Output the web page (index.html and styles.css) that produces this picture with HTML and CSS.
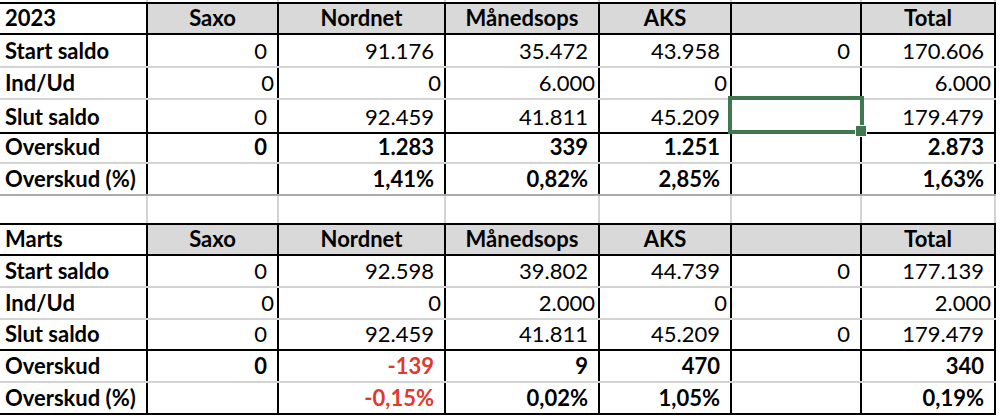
FILE: index.html
```html
<!DOCTYPE html>
<html lang="da">
<head>
<meta charset="utf-8">
<title>Overskud 2023</title>
<link rel="stylesheet" href="styles.css">
</head>
<body>
<div class="sheet">
  <div class="row edge"><div class="c"></div><div class="c"></div><div class="c"></div><div class="c"></div><div class="c"></div><div class="c"></div><div class="c"></div></div>

  <div class="row r31 line-dark head">
    <div class="c lbl">2023</div><div class="c h">Saxo</div><div class="c h">Nordnet</div><div class="c h">Månedsops</div><div class="c h">AKS</div><div class="c h"></div><div class="c h">Total</div>
  </div>
  <div class="row r33">
    <div class="c lbl">Start saldo</div><div class="c">0</div><div class="c">91.176</div><div class="c">35.472</div><div class="c">43.958</div><div class="c">0</div><div class="c">170.606</div>
  </div>
  <div class="row r32 io">
    <div class="c lbl">Ind/Ud</div><div class="c">0</div><div class="c">0</div><div class="c">6.000</div><div class="c">0</div><div class="c"></div><div class="c">6.000</div>
  </div>
  <div class="row r34 line-dark">
    <div class="c lbl">Slut saldo</div><div class="c">0</div><div class="c">92.459</div><div class="c">41.811</div><div class="c">45.209</div><div class="c"></div><div class="c">179.479</div>
  </div>
  <div class="row r30 b">
    <div class="c lbl">Overskud</div><div class="c">0</div><div class="c">1.283</div><div class="c">339</div><div class="c">1.251</div><div class="c"></div><div class="c">2.873</div>
  </div>
  <div class="row r32 b line-mid">
    <div class="c lbl">Overskud (%)</div><div class="c"></div><div class="c">1,41%</div><div class="c">0,82%</div><div class="c">2,85%</div><div class="c"></div><div class="c">1,63%</div>
  </div>

  <div class="row r29 line-dark gap"><div class="c"></div><div class="c"></div><div class="c"></div><div class="c"></div><div class="c"></div><div class="c"></div><div class="c"></div></div>

  <div class="row r31 line-dark head">
    <div class="c lbl">Marts</div><div class="c h">Saxo</div><div class="c h">Nordnet</div><div class="c h">Månedsops</div><div class="c h">AKS</div><div class="c h"></div><div class="c h">Total</div>
  </div>
  <div class="row r32">
    <div class="c lbl">Start saldo</div><div class="c">0</div><div class="c">92.598</div><div class="c">39.802</div><div class="c">44.739</div><div class="c">0</div><div class="c">177.139</div>
  </div>
  <div class="row r32 io">
    <div class="c lbl">Ind/Ud</div><div class="c">0</div><div class="c">0</div><div class="c">2.000</div><div class="c">0</div><div class="c"></div><div class="c">2.000</div>
  </div>
  <div class="row r31 line-dark">
    <div class="c lbl">Slut saldo</div><div class="c">0</div><div class="c">92.459</div><div class="c">41.811</div><div class="c">45.209</div><div class="c">0</div><div class="c">179.479</div>
  </div>
  <div class="row r32 b">
    <div class="c lbl">Overskud</div><div class="c">0</div><div class="c neg">-139</div><div class="c">9</div><div class="c">470</div><div class="c"></div><div class="c">340</div>
  </div>
  <div class="row r32 b line-dark">
    <div class="c lbl">Overskud (%)</div><div class="c"></div><div class="c neg">-0,15%</div><div class="c">0,02%</div><div class="c">1,05%</div><div class="c"></div><div class="c">0,19%</div>
  </div>

  <div class="selection"><span class="handle"></span></div>
</div>
</body>
</html>
```

FILE: styles.css
```css
html, body {
  margin: 0;
  padding: 0;
  background: #ffffff;
}

body {
  font-family: Lato, "Open Sans", "Liberation Sans", sans-serif;
  font-size: 22px;
  color: #000000;
}

.sheet {
  position: relative;
  width: 1000px;
  height: 418px;
  overflow: hidden;
}

.row {
  display: grid;
  grid-template-columns: 148px 131px 167px 154px 132px 130px 134px;
  width: 996px;
  box-sizing: border-box;
  border-bottom: 2px solid #d3d3d3;
}

.row.line-dark { border-bottom-color: #000000; }
.row.line-mid { border-bottom-color: #ababab; }

.edge { height: 4px; border-bottom-color: #000000; }
.edge .c, .gap .c { border-right-color: #d3d3d3; padding: 0; }

.r29 { height: 29px; }
.r30 { height: 30px; }
.r31 { height: 31px; }
.r32 { height: 32px; }
.r33 { height: 33px; }
.r34 { height: 34px; }

.c {
  box-sizing: border-box;
  border-right: 2px solid #000000;
  display: flex;
  align-items: flex-end;
  justify-content: flex-end;
  padding: 0 10px 2px 4px;
  line-height: 26px;
  white-space: nowrap;
  overflow: hidden;
}

.lbl {
  justify-content: flex-start;
  padding-left: 5px;
  font-weight: 700;
}

.head .c { font-weight: 700; }

.h {
  justify-content: center;
  padding: 0 0 2px;
  background: #d9d9d9;
}

.io .c { padding-right: 3px; }
.io .lbl { padding-right: 0; }

.b .c { font-weight: 700; }

.neg { color: #e2382d; }

.selection {
  position: absolute;
  left: 728px;
  top: 96px;
  width: 136px;
  height: 38px;
  box-sizing: border-box;
  border: 4px solid #3f7751;
}

.handle {
  position: absolute;
  left: 123px;
  top: 25px;
  width: 10px;
  height: 10px;
  background: #3f7751;
  border: 1px solid #ffffff;
}
```
